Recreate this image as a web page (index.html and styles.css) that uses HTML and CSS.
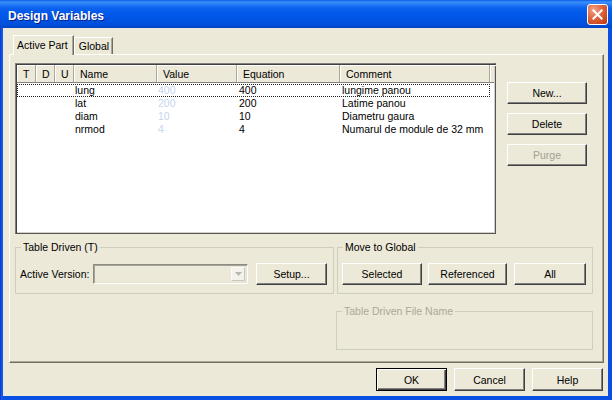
FILE: index.html
```html
<!DOCTYPE html>
<html>
<head>
<meta charset="utf-8">
<title>Design Variables</title>
<link rel="stylesheet" href="styles.css">
</head>
<body>
<div class="window">
  <div class="titlebar">
    <span class="title">Design Variables</span>
    <button class="close" aria-label="Close">
      <svg width="21" height="21" viewBox="0 0 21 21"><path d="M6 6 L15 15 M15 6 L6 15" stroke="#fff" stroke-width="2.2" stroke-linecap="square"/></svg>
    </button>
  </div>
  <div class="frame">
    <div class="client">
      <div class="tabs">
        <div class="tab active">Active Part</div>
        <div class="tab">Global</div>
      </div>
      <div class="panel">
        <div class="top-row">
          <div class="list">
            <div class="lv-head">
              <div class="c c-t">T</div>
              <div class="c c-d">D</div>
              <div class="c c-u">U</div>
              <div class="c c-name">Name</div>
              <div class="c c-val">Value</div>
              <div class="c c-eq">Equation</div>
              <div class="c c-com">Comment</div>
              <div class="c c-fill"></div>
            </div>
            <div class="lv-body">
              <div class="lv-row focus">
                <div class="c c-t"></div><div class="c c-d"></div><div class="c c-u"></div>
                <div class="c c-name">lung</div><div class="c c-val">400</div><div class="c c-eq">400</div><div class="c c-com">lungime panou</div>
              </div>
              <div class="lv-row">
                <div class="c c-t"></div><div class="c c-d"></div><div class="c c-u"></div>
                <div class="c c-name">lat</div><div class="c c-val">200</div><div class="c c-eq">200</div><div class="c c-com">Latime panou</div>
              </div>
              <div class="lv-row">
                <div class="c c-t"></div><div class="c c-d"></div><div class="c c-u"></div>
                <div class="c c-name">diam</div><div class="c c-val">10</div><div class="c c-eq">10</div><div class="c c-com">Diametru gaura</div>
              </div>
              <div class="lv-row">
                <div class="c c-t"></div><div class="c c-d"></div><div class="c c-u"></div>
                <div class="c c-name">nrmod</div><div class="c c-val">4</div><div class="c c-eq">4</div><div class="c c-com">Numarul de module de 32 mm</div>
              </div>
            </div>
          </div>
          <div class="side-buttons">
            <button class="btn side">New...</button>
            <button class="btn side">Delete</button>
            <button class="btn side" disabled>Purge</button>
          </div>
        </div>
        <div class="groups-row">
          <fieldset class="group table-driven">
            <legend>Table Driven (T)</legend>
            <div class="group-line">
              <span class="label">Active Version:</span>
              <div class="combo">
                <div class="combo-btn">
                  <svg width="7" height="4" viewBox="0 0 7 4"><path d="M0 0 H7 L3.5 4 Z" fill="#b9b7ac"/></svg>
                </div>
              </div>
              <button class="btn setup">Setup...</button>
            </div>
          </fieldset>
          <fieldset class="group move">
            <legend>Move to Global</legend>
            <div class="group-line">
              <button class="btn sel">Selected</button>
              <button class="btn ref">Referenced</button>
              <button class="btn all">All</button>
            </div>
          </fieldset>
        </div>
        <fieldset class="group file disabled">
          <legend>Table Driven File Name</legend>
        </fieldset>
      </div>
      <div class="dialog-buttons">
        <button class="btn dlg default">OK</button>
        <button class="btn dlg">Cancel</button>
        <button class="btn dlg">Help</button>
      </div>
    </div>
  </div>
</div>
</body>
</html>
```
FILE: styles.css
```css
* { box-sizing: border-box; }
html, body { margin: 0; padding: 0; }
body {
  width: 612px;
  height: 400px;
  overflow: hidden;
  font-family: "Liberation Sans", Arial, sans-serif;
  font-size: 10.5px;
  color: #000;
  background: #ece9d8;
}
.window {
  width: 612px;
  height: 400px;
  display: flex;
  flex-direction: column;
  background: #0839cf;
}
.titlebar {
  height: 28px;
  flex: none;
  display: flex;
  align-items: center;
  justify-content: space-between;
  padding: 1px 4px 0 8px;
  background: linear-gradient(to bottom, #0a5ce9 0px, #3b90fb 2px, #2a7ff7 4px, #0b62ee 8px, #0058ea 14px, #0054e3 20px, #004ed8 25px, #0044c6 28px);
}
.title {
  color: #fff;
  font-weight: bold;
  font-size: 12px;
  padding-top: 2px;
  text-shadow: 1px 1px 0 #0a1f8c;
}
.close {
  width: 21px;
  height: 21px;
  padding: 0;
  border: 1px solid #fff;
  border-radius: 3px;
  background: radial-gradient(circle at 30% 25%, #f0a58a 0%, #e3704c 35%, #cc4a22 75%, #b8380f 100%);
  display: flex;
  align-items: center;
  justify-content: center;
}
.close svg { display: block; }
.frame {
  flex: 1;
  display: flex;
  padding: 0 4px 4px 3px;
  background: linear-gradient(to right, #0834c9 0px, #1a5fee 2px, #0a4fe3 3px, #0a4fe3 100%);
}
.client {
  flex: 1;
  background: #ece9d8;
  padding: 0 4px 0 6px;
  display: flex;
  flex-direction: column;
}

/* Tabs */
.tabs {
  display: flex;
  align-items: flex-end;
  height: 19px;
  margin: 7px 0 0 4px;
  position: relative;
  z-index: 1;
}
.tab {
  height: 17px;
  line-height: 16px;
  padding: 0 3px 0 4px;
  border: 1px solid;
  border-color: #fff #716f64 transparent #fff;
  border-bottom: none;
  box-shadow: inset -1px 0 #aca899;
  background: #ece9d8;
}
.tab.active {
  height: 20px;
  margin-bottom: -1px;
  padding: 0 5px 0 3px;
  line-height: 18px;
  border-right-color: #716f64;
}
.panel {
  height: 309px;
  flex: none;
  border: 1px solid;
  border-color: #fff #716f64 #716f64 #fff;
  box-shadow: inset -1px -1px #aca899;
  padding: 8px 0 0 5px;
}
.top-row {
  display: flex;
  gap: 11px;
}
.list {
  width: 481px;
  height: 171px;
  background: #fff;
  border: 1px solid;
  border-color: #808080 #555 #555 #808080;
  box-shadow: inset 1px 1px #404040, inset -1px -1px #d4d0c8;
  padding: 1px;
}
.lv-head {
  display: flex;
  height: 18px;
  background: #ece9d8;
  border-bottom: 1px solid #808080;
}
.lv-head .c {
  padding-left: 6px;
  line-height: 18px;
  border-right: 1px solid #aca899;
  box-shadow: inset 1px 1px #fff;
  white-space: nowrap;
}
.lv-head .c-fill { flex: 1; border-right: none; }
.c { flex: none; overflow: hidden; white-space: nowrap; }
.c-t, .c-d, .c-u { width: 19px; }
.c-name { width: 83px; }
.c-val { width: 80px; }
.c-eq { width: 103px; }
.c-com { width: 150px; }
.lv-body { padding-top: 1px; }
.lv-row {
  display: flex;
  width: 473px;
  height: 13px;
  line-height: 13px;
}
.lv-row .c { padding-left: 1px; }
.lv-row .c-eq, .lv-row .c-com { padding-left: 2px; }
.lv-row .c-val { color: #c6d4ec; }
.lv-row.focus {
  outline: 1px dotted #222;
  outline-offset: -1px;
}

.side-buttons {
  display: flex;
  flex-direction: column;
  gap: 9px;
  padding-top: 19px;
}

/* Buttons */
.btn {
  font: inherit;
  color: #000;
  height: 22px;
  padding: 0;
  background: #ece9d8;
  border: 1px solid;
  border-color: #fff #404040 #404040 #fff;
  box-shadow: inset -1px -1px #808080;
  flex: none;
}
.btn:disabled { color: #a3a194; }
.btn.side { width: 80px; }
.btn.setup { width: 71px; margin-left: 8px; }
.btn.sel { width: 80px; }
.btn.ref { width: 79px; margin-left: 6px; }
.btn.all { width: 72px; margin-left: 7px; }
.btn.dlg { width: 71px; height: 23px; }
.btn.default {
  border-color: #000;
  box-shadow: inset 1px 1px #fff, inset -1px -1px #404040, inset -2px -2px #808080;
}

/* Group boxes */
.groups-row {
  display: flex;
  gap: 3px;
  margin-top: 7px;
}
.group {
  margin: 0;
  min-width: 0;
  border: 1px solid #cfcdbe;
  padding: 9px 4px 0 4px;
  height: 53px;
}
.group legend {
  padding: 0 2px;
  margin-left: 1px;
  line-height: 13px;
}
.group.table-driven { width: 319px; }
.group.move { width: 256px; }
.group-line {
  display: flex;
  align-items: center;
  height: 22px;
}
.label { width: 73px; flex: none; }
.combo {
  width: 155px;
  height: 20px;
  flex: none;
  background: #ece9d8;
  border: 1px solid;
  border-color: #8d8b80 #fff #fff #8d8b80;
  box-shadow: inset 1px 1px #a5a397, inset -1px -1px #e4e1d2;
  display: flex;
  justify-content: flex-end;
  padding: 2px;
}
.combo-btn {
  width: 14px;
  height: 100%;
  background: #f3f2ec;
  border: 1px solid;
  border-color: #fbfaf6 #c9c7ba #c9c7ba #fbfaf6;
  display: flex;
  align-items: center;
  justify-content: center;
}
.combo-btn svg { display: block; }
.group.file {
  width: 257px;
  height: 45px;
  margin: 11px 0 0 321px;
}
.group.disabled legend { color: #aca899; }

.dialog-buttons {
  display: flex;
  justify-content: flex-end;
  gap: 7px;
  margin-top: 5px;
  padding-right: 1px;
}
```
